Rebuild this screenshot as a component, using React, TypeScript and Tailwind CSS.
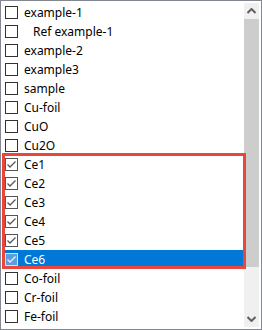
const items: { label: string; checked?: boolean; indent?: boolean; selected?: boolean }[] = [
  { label: "example-1" },
  { label: "Ref example-1", indent: true },
  { label: "example-2" },
  { label: "example3" },
  { label: "sample" },
  { label: "Cu-foil" },
  { label: "CuO" },
  { label: "Cu2O" },
  { label: "Ce1", checked: true },
  { label: "Ce2", checked: true },
  { label: "Ce3", checked: true },
  { label: "Ce4", checked: true },
  { label: "Ce5", checked: true },
  { label: "Ce6", checked: true, selected: true },
  { label: "Co-foil" },
  { label: "Cr-foil" },
  { label: "Fe-foil" },
];

function CheckBox({ checked, selected }: { checked?: boolean; selected?: boolean }) {
  return (
    <div
      className={
        "w-[13px] h-[13px] shrink-0 border flex items-center justify-center " +
        (selected
          ? "border-[#cfe3f5] bg-[#5a9ee0]"
          : checked
          ? "border-[#555555] bg-white"
          : "border-[#333333] bg-white")
      }
    >
      {checked && (
        <svg width="11" height="11" viewBox="0 0 11 11">
          <path
            d="M1.5 5.5 L4 8 L9.5 2.5"
            fill="none"
            stroke={selected ? "#e6f1fb" : "#555555"}
            strokeWidth="1.3"
          />
        </svg>
      )}
    </div>
  );
}

export default function App() {
  return (
    <div
      className="relative w-[262px] h-[330px] border border-[#828790] bg-white p-[2px] flex text-[12px] text-black"
      style={{ fontFamily: '"Noto Sans", "Open Sans", sans-serif' }}
    >
      {/* list */}
      <div className="flex-1 flex flex-col overflow-hidden">
        {items.map((it) => (
          <div
            key={it.label}
            className={
              "h-[19px] shrink-0 flex items-center pl-[2px] " +
              (it.selected ? "bg-[#0078d7] text-white" : "")
            }
          >
            <CheckBox checked={it.checked} selected={it.selected} />
            <span className={"leading-none " + (it.indent ? "ml-[15px]" : "ml-[6px]")}>{it.label}</span>
          </div>
        ))}
      </div>

      {/* scrollbar */}
      <div className="w-[15px] shrink-0 flex flex-col bg-[#f0f0f0]">
        <div className="h-[16px] flex items-center justify-center">
          <svg width="9" height="6" viewBox="0 0 9 6">
            <path d="M0.5 5 L4.5 1 L8.5 5" fill="none" stroke="#606060" strokeWidth="2" />
          </svg>
        </div>
        <div className="h-[248px] bg-[#cdcdcd]" />
        <div className="flex-1" />
        <div className="h-[16px] flex items-center justify-center">
          <svg width="9" height="6" viewBox="0 0 9 6">
            <path d="M0.5 1 L4.5 5 L8.5 1" fill="none" stroke="#606060" strokeWidth="2" />
          </svg>
        </div>
      </div>

      {/* annotation box */}
      <div className="absolute left-[1px] top-[152px] w-[244px] h-[116px] border-[3px] border-[#e8473e] pointer-events-none" />
    </div>
  );
}
